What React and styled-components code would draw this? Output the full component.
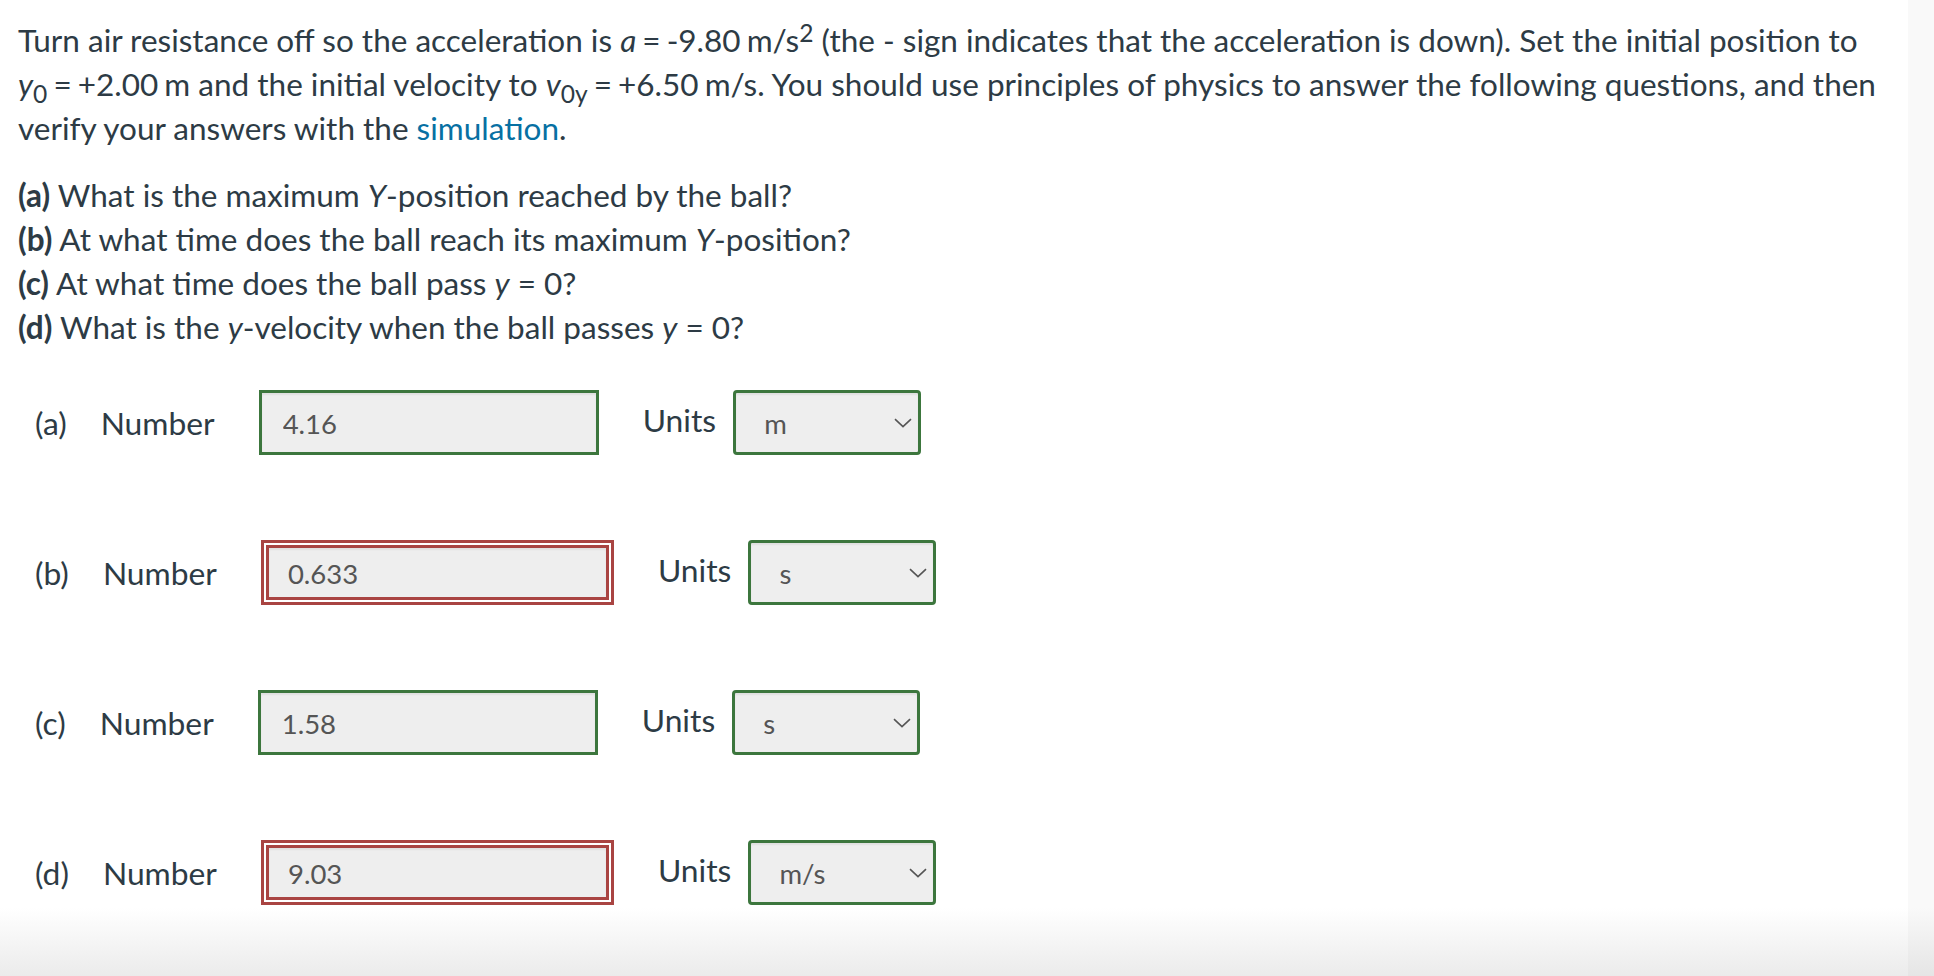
import React from 'react'
import styled, { createGlobalStyle } from 'styled-components'

const GlobalStyle = createGlobalStyle`
  html, body {
    margin: 0;
    padding: 0;
    background: #fff;
  }
  body {
    font-family: Lato, "Noto Sans", sans-serif;
    color: #2d3b45;
  }
`

const Page = styled.div`
  display: grid;
  grid-template-columns: 1fr 26px;
  height: 976px;
  overflow: hidden;
  background: linear-gradient(to bottom, #ffffff 0, #ffffff 908px, #ebebeb 976px);
`

const Content = styled.div`
  padding: 18px 0 0 18px;
`

const Gutter = styled.div`
  background: rgba(0, 0, 0, 0.022);
`

const Para = styled.p`
  margin: 0 0 23px;
  font-size: 31.5px;
  line-height: 44px;
`

// inline maths: kept on one line, slightly tighter spaces around "="
const Eq = styled.span`
  white-space: nowrap;
  word-spacing: -2px;
`

const Sub = styled.sub`
  font-size: 0.78em;
  font-style: normal;
  vertical-align: -0.28em;
  line-height: 0;
`

const Sup = styled.sup`
  font-size: 0.78em;
  vertical-align: 0.42em;
  line-height: 0;
`

const Link = styled.a`
  color: #0770a3;
  text-decoration: none;
`

const Answers = styled.div`
  display: flex;
  flex-direction: column;
  gap: 85px;
  margin-top: 41px;
  padding-left: 17px;
`

const Row = styled.div`
  display: flex;
  align-items: center;
  height: 65px;
  font-size: 31.8px;
`

const PartLabel = styled.span`
  margin-right: 34px;
`

const NumberLabel = styled.span`
  margin-right: 44px;
`

const UnitsLabel = styled.span`
  margin: 0 17px 0 44px;
  transform: translateY(-3px);
`

const Field = styled.input`
  box-sizing: border-box;
  width: ${p => p.$w || 340}px;
  height: ${p => p.$h || 65}px;
  margin: 0;
  padding: 1px 0 0 ${p => p.$pad || 21}px;
  border: 3px solid ${p => p.$bad ? '#a94442' : '#3c763d'};
  border-radius: 0;
  background: #eeeeee;
  box-shadow: inset 0 2px 2px rgba(0, 0, 0, 0.06);
  font-family: Lato, "Noto Sans", sans-serif;
  font-size: 27.5px;
  color: #555;
  outline: none;
`

const ErrorRing = styled.div`
  box-sizing: border-box;
  width: 353px;
  height: 65px;
  padding: 2px;
  border: 3px solid #a94442;
  background: #fff;
`

const SelectWrap = styled.div`
  position: relative;
  width: 188px;
  height: 65px;
`

const Select = styled.select`
  appearance: none;
  box-sizing: border-box;
  width: 100%;
  height: 100%;
  margin: 0;
  padding: 1px 0 0 28px;
  border: 3px solid #3c763d;
  border-radius: 4px;
  background: #eeeeee;
  box-shadow: inset 0 2px 2px rgba(0, 0, 0, 0.06);
  font-family: Lato, "Noto Sans", sans-serif;
  font-size: 27.5px;
  color: #555;
  outline: none;
`

const Chevron = styled.svg`
  position: absolute;
  right: 9px;
  top: 28px;
  pointer-events: none;
`

const answers = [
  { part: '(a)', value: '4.16', unit: 'm', bad: false },
  { part: '(b)', value: '0.633', unit: 's', bad: true },
  { part: '(c)', value: '1.58', unit: 's', bad: false },
  { part: '(d)', value: '9.03', unit: 'm/s', bad: true }
]

const units = ['m', 's', 'm/s', 'm/s²']

const AnswerRow = ({ part, value, unit, bad }) => (
  <Row>
    <PartLabel>{part}</PartLabel>
    <NumberLabel>Number</NumberLabel>
    {bad ? (
      <ErrorRing>
        <Field $bad $w={343} $h={55} $pad={19} value={value} readOnly />
      </ErrorRing>
    ) : (
      <Field value={value} readOnly />
    )}
    <UnitsLabel>Units</UnitsLabel>
    <SelectWrap>
      <Select value={unit} onChange={() => {}}>
        {units.map(u => (
          <option key={u} value={u}>{u}</option>
        ))}
      </Select>
      <Chevron width="18" height="10" viewBox="0 0 18 10">
        <path d="M1 1.2 L9 8.6 L17 1.2" fill="none" stroke="#555" strokeWidth="1.6" />
      </Chevron>
    </SelectWrap>
  </Row>
)

const App = () => {
  return (
    <>
      <GlobalStyle />
      <Page>
        <Content>
          <Para>
            Turn air resistance off so the acceleration is{' '}
            <Eq>
              <i>a</i> = -9.80 m/s<Sup>2</Sup>
            </Eq>{' '}
            (the - sign indicates that the acceleration is down). Set the initial position to{' '}
            <Eq>
              <i>y</i>
              <Sub>0</Sub> = +2.00 m
            </Eq>{' '}
            and the initial velocity to{' '}
            <Eq>
              <i>v</i>
              <Sub>0y</Sub> = +6.50 m/s.
            </Eq>{' '}
            You should use principles of physics to answer the following questions, and then
            verify your answers with the <Link href="#">simulation</Link>.
          </Para>
          <Para>
            <b>(a)</b> What is the maximum <i>Y</i>-position reached by the ball?
            <br />
            <b>(b)</b> At what time does the ball reach its maximum <i>Y</i>-position?
            <br />
            <b>(c)</b> At what time does the ball pass <i>y</i> = 0?
            <br />
            <b>(d)</b> What is the <i>y</i>-velocity when the ball passes <i>y</i> = 0?
          </Para>
          <Answers>
            {answers.map(a => (
              <AnswerRow key={a.part} {...a} />
            ))}
          </Answers>
        </Content>
        <Gutter />
      </Page>
    </>
  )
}

export default App
